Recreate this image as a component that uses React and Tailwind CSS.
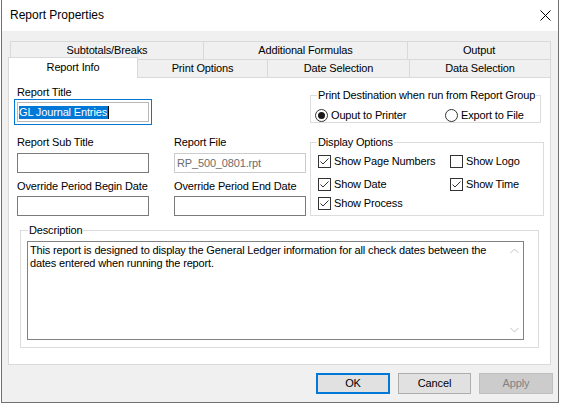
import React from "react";

const sans = "font-['Liberation_Sans',Arial,sans-serif]";

function CheckBox({ checked, label }) {
  return (
    <div className="flex items-center h-[13px]">
      <span className="w-[13px] h-[13px] border border-[#333333] bg-white flex items-center justify-center shrink-0">
        {checked && (
          <svg width="11" height="11" viewBox="0 0 11 11">
            <path d="M1.5 5.5 L4 8 L9.5 2.5" fill="none" stroke="#333333" strokeWidth="1" />
          </svg>
        )}
      </span>
      <span className="ml-[3px] leading-[13px] whitespace-nowrap">{label}</span>
    </div>
  );
}

function Radio({ checked, label }) {
  return (
    <div className="flex items-center h-[13px]">
      <span className="w-[13px] h-[13px] rounded-full border border-[#333333] bg-white flex items-center justify-center shrink-0">
        {checked && <span className="w-[7px] h-[7px] rounded-full bg-[#1a1a1a]" />}
      </span>
      <span className="ml-[3px] leading-[13px] whitespace-nowrap">{label}</span>
    </div>
  );
}

function TextBox({ value, disabled }) {
  return (
    <div
      className={
        "w-[132px] h-[20px] bg-white border flex items-center px-[2px] leading-[13px] " +
        (disabled ? "border-[#cccccc] text-[#6d6d6d]" : "border-[#7a7a7a]")
      }
    >
      {value}
    </div>
  );
}

function Tab({ children, className }) {
  return (
    <div
      className={
        "h-[18px] bg-[#f0f0f0] border-t border-[#d9d9d9] flex items-center justify-center leading-[13px] " +
        className
      }
    >
      {children}
    </div>
  );
}

export default function App() {
  return (
    <div className={"w-[561px] h-[408px] bg-white pl-[1px] text-[11px] tracking-[-0.15px] text-black " + sans}>
      <div className="w-[558px] h-[403px] border-x border-b border-[#707070] bg-[#f0f0f0] flex flex-col">
        {/* title bar */}
        <div className="h-[31px] bg-white flex items-center justify-between pl-[8px] pr-[6px]">
          <span className="text-[12px] tracking-normal leading-[31px]">Report Properties</span>
          <svg width="11" height="11" viewBox="0 0 11 11" className="mr-[1px]">
            <path d="M0.5 0.5 L10.5 10.5 M10.5 0.5 L0.5 10.5" stroke="#000000" strokeWidth="1" />
          </svg>
        </div>

        {/* tabs */}
        <div className="mt-[10px] flex flex-col">
          <div className="flex ml-[8px]">
            <Tab className="w-[193px] border-l">Subtotals/Breaks</Tab>
            <Tab className="w-[204px] border-l">Additional Formulas</Tab>
            <Tab className="w-[144px] border-x">Output</Tab>
          </div>
          <div className="flex items-end h-[18px] ml-[6px]">
            <div className="relative z-10 w-[130px] h-[21px] -mb-[1px] bg-white border-t border-x border-[#d9d9d9] flex items-start justify-center pt-[3px] leading-[13px]">
              Report Info
            </div>
            <Tab className="w-[130px] border-r">Print Options</Tab>
            <Tab className="w-[142px] border-r">Date Selection</Tab>
            <Tab className="w-[141px] border-r">Data Selection</Tab>
          </div>
        </div>

        {/* page */}
        <div className="ml-[6px] w-[543px] h-[288px] bg-white border border-[#d9d9d9] flex flex-col">
          <div className="h-[146px] flex">
            {/* text fields */}
            <div className="ml-[5px] pt-[8px] flex flex-col">
              <div className="pl-[3px] leading-[13px]">Report Title</div>
              <div className="w-[138px] h-[26px] border border-[#0078d7] bg-white p-[2px]">
                <div className="h-full border border-[#b9b9b9] flex items-center pl-[1px]">
                  <span className="bg-[#0078d7] text-white leading-[13px] pr-[1px]">GL Journal Entries</span>
                  <span className="w-[1px] h-[13px] bg-black" />
                </div>
              </div>
              <div className="pl-[3px] mt-[11px] grid grid-cols-[132px_132px] gap-x-[25px]">
                <div className="leading-[13px]">Report Sub Title</div>
                <div className="leading-[13px]">Report File</div>
                <div className="mt-[4px]">
                  <TextBox value="" />
                </div>
                <div className="mt-[4px]">
                  <TextBox value="RP_500_0801.rpt" disabled />
                </div>
                <div className="mt-[7px] leading-[13px] whitespace-nowrap">Override Period Begin Date</div>
                <div className="mt-[7px] leading-[13px] whitespace-nowrap">Override Period End Date</div>
                <div className="mt-[3px]">
                  <TextBox value="" />
                </div>
                <div className="mt-[3px]">
                  <TextBox value="" />
                </div>
              </div>
            </div>

            {/* option groups */}
            <div className="ml-[4px] pt-[11px] flex flex-col">
              <fieldset className="w-[231px] border border-[#dcdcdc] p-0 m-0">
                <legend className="ml-[6px] px-[1px] leading-[13px] whitespace-nowrap">
                  Print Destination when run from Report Group
                </legend>
                <div className="pt-[7px] pl-[4px] flex">
                  <div className="w-[130px]">
                    <Radio checked label="Ouput to Printer" />
                  </div>
                  <Radio label="Export to File" />
                </div>
              </fieldset>

              <fieldset className="mt-[13px] w-[234px] border border-[#dcdcdc] p-0 m-0">
                <legend className="ml-[6px] px-[1px] leading-[13px] whitespace-nowrap">Display Options</legend>
                <div className="pt-[6px] pb-[5px] pl-[7px] flex flex-col">
                  <div className="flex">
                    <div className="w-[132px]">
                      <CheckBox checked label="Show Page Numbers" />
                    </div>
                    <CheckBox label="Show Logo" />
                  </div>
                  <div className="flex mt-[10px]">
                    <div className="w-[132px]">
                      <CheckBox checked label="Show Date" />
                    </div>
                    <CheckBox checked label="Show Time" />
                  </div>
                  <div className="mt-[6px]">
                    <CheckBox checked label="Show Process" />
                  </div>
                </div>
              </fieldset>
            </div>
          </div>

          {/* description */}
          <fieldset className="ml-[11px] w-[519px] border border-[#dcdcdc] p-0 m-0">
            <legend className="ml-[7px] px-[1px] leading-[13px] whitespace-nowrap">Description</legend>
            <div className="mt-[4px] mb-[7px] ml-[6px] w-[497px] h-[99px] border border-[#828282] bg-white flex">
              <div className="flex-1 pl-[2px] pt-[2px] leading-[13px]">
                This report is designed to display the General Ledger information for all check dates between the
                dates entered when running the report.
              </div>
              <div className="w-[17px] flex flex-col items-center justify-between py-[6px]">
                <svg width="9" height="6" viewBox="0 0 9 6">
                  <path d="M0.5 5 L4.5 1 L8.5 5" fill="none" stroke="#c2c2c2" strokeWidth="1" />
                </svg>
                <svg width="9" height="6" viewBox="0 0 9 6">
                  <path d="M0.5 1 L4.5 5 L8.5 1" fill="none" stroke="#c2c2c2" strokeWidth="1" />
                </svg>
              </div>
            </div>
          </fieldset>
        </div>

        {/* buttons */}
        <div className="mt-[8px] flex justify-end pr-[5px] gap-x-[8px]">
          <div className="w-[74px] h-[21px] border-2 border-[#0078d7] bg-[#e1e1e1] flex items-center justify-center leading-[13px]">
            OK
          </div>
          <div className="w-[73px] h-[21px] border border-[#adadad] bg-[#e1e1e1] flex items-center justify-center leading-[13px]">
            Cancel
          </div>
          <div className="w-[74px] h-[21px] border border-[#bfbfbf] bg-[#cccccc] text-[#838383] flex items-center justify-center leading-[13px]">
            Apply
          </div>
        </div>
      </div>
    </div>
  );
}
